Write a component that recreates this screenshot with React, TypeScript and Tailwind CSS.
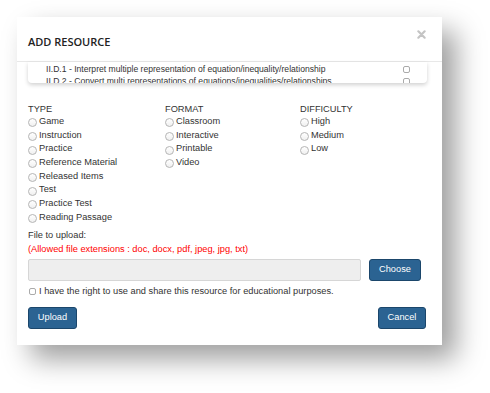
import React from "react";

const Radio = ({ label }: { label: string }) => (
  <div className="flex items-center h-[13.7px] leading-[13.7px]">
    <span className="mt-[2px] w-[9px] h-[9px] rounded-full border border-[#b5b5b5] bg-gradient-to-b from-white to-[#f0f0f0] shrink-0" />
    <span className="ml-[2px]">{label}</span>
  </div>
);

const Col = ({ title, items, w }: { title: string; items: string[]; w: string }) => (
  <div className={`flex flex-col ${w}`}>
    <div className="leading-[12px] h-[12px]">{title}</div>
    {items.map((i) => (
      <Radio key={i} label={i} />
    ))}
  </div>
);

export default function App() {
  return (
    <div className="w-[490px] h-[393px] bg-white pt-[17px] pl-[17px]" style={{ fontFamily: '"Liberation Sans", Arial, sans-serif' }}>
      <div className="w-[425px] h-[328px] bg-white flex flex-col shadow-[14px_14px_26px_rgba(0,0,0,0.38)] text-[9.25px] text-[#333]">
        <div className="h-[45px] flex justify-between border-b border-[#e8e8e8] pl-[11px] pr-[16px]">
          <div className="pt-[18px] text-[11px] leading-[13px] font-semibold text-[#222]" style={{ fontFamily: '"Open Sans", sans-serif' }}>
            ADD RESOURCE
          </div>
          <svg width="9" height="9" viewBox="0 0 10 10" className="mt-[13px]">
            <path d="M1.5 1.5 L8.5 8.5 M8.5 1.5 L1.5 8.5" stroke="#c4c4c4" strokeWidth="2.4" strokeLinecap="round" />
          </svg>
        </div>
        <div className="mx-[11px] mr-[15px] h-[21px] overflow-hidden rounded-b-[4px] shadow-[0_2px_4px_rgba(0,0,0,0.18)] pl-[18px] pr-[17px] pt-[1px] text-[8.6px]">
          <div className="flex justify-between items-center h-[12px] leading-[12px]">
            <span>II.D.1 - Interpret multiple representation of equation/inequality/relationship</span>
            <span className="w-[7px] h-[7px] rounded-[2px] border border-[#aaa]" />
          </div>
          <div className="flex justify-between items-center h-[12px] leading-[12px]">
            <span>II.D.2 - Convert multi representations of equations/inequalities/relationships</span>
            <span className="w-[7px] h-[7px] rounded-[2px] border border-[#aaa]" />
          </div>
        </div>
        <div className="pl-[11px] pr-[16px] flex flex-col">
          <div className="flex mt-[20px]">
            <Col
              w="w-[137px]"
              title="TYPE"
              items={["Game", "Instruction", "Practice", "Reference Material", "Released Items", "Test", "Practice Test", "Reading Passage"]}
            />
            <Col w="w-[135px]" title="FORMAT" items={["Classroom", "Interactive", "Printable", "Video"]} />
            <Col w="w-[120px]" title="DIFFICULTY" items={["High", "Medium", "Low"]} />
          </div>
          <div className="mt-[3px] leading-[14px]">File to upload:</div>
          <div className="leading-[14px] text-[#f00]">(Allowed file extensions : doc, docx, pdf, jpeg, jpg, txt)</div>
          <div className="mt-[3px] flex items-center">
            <div className="w-[333px] h-[22px] bg-[#eeeeee] border border-[#d6d6d6] rounded-[2px]" />
            <button className="ml-[8px] w-[52px] h-[22px] bg-[#2b6392] border border-[#1b466b] rounded-[3px] text-white text-[9.25px]">
              Choose
            </button>
          </div>
          <div className="mt-[3px] flex items-center h-[14px] leading-[14px]">
            <span className="ml-[1px] w-[7px] h-[7px] rounded-[2px] border border-[#aaa] mt-[1px]" />
            <span className="ml-[3px]">I have the right to use and share this resource for educational purposes.</span>
          </div>
          <div className="mt-[9px] flex justify-between">
            <button className="w-[49px] h-[22px] bg-[#2b6392] border border-[#1b466b] rounded-[3px] text-white text-[9.25px]">
              Upload
            </button>
            <button className="w-[48px] h-[22px] bg-[#2b6392] border border-[#1b466b] rounded-[3px] text-white text-[9.25px]">
              Cancel
            </button>
          </div>
        </div>
      </div>
    </div>
  );
}
